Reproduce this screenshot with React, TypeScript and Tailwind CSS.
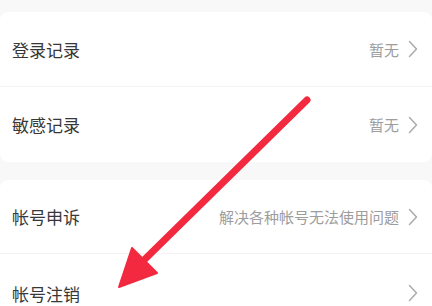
import React from "react";

const font = { fontFamily: '"Noto Sans CJK SC", "Noto Sans", sans-serif' };

function Chevron() {
  return (
    <svg width="10" height="18" viewBox="0 0 10 18" fill="none" className="shrink-0">
      <polyline points="1.5,1.5 8.5,9 1.5,16.5" stroke="#ababab" strokeWidth="1.5" strokeLinecap="round" strokeLinejoin="round" />
    </svg>
  );
}

function Row({ label, value, h, divider }: { label: string; value?: string; h: string; divider?: boolean }) {
  return (
    <div className={`flex items-center justify-between pl-3 pr-[14px] ${h} ${divider ? "border-b border-[#f2f2f2]" : ""}`}>
      <span className="text-[17px] text-[#383838] leading-none">{label}</span>
      <div className="flex items-center gap-[9px]">
        {value && <span className="text-[15px] text-[#9d9d9d] leading-none">{value}</span>}
        <Chevron />
      </div>
    </div>
  );
}

export default function App() {
  return (
    <div className="relative w-[432px] h-[306px] overflow-hidden bg-[#f8f8f8] pt-3" style={font}>
      <div className="bg-white rounded-lg">
        <Row label="登录记录" value="暂无" h="h-[75px]" divider />
        <Row label="敏感记录" value="暂无" h="h-[75px]" />
      </div>
      <div className="h-[18px]" />
      <div className="bg-white rounded-lg">
        <Row label="帐号申诉" value="解决各种帐号无法使用问题" h="h-[74px]" divider />
        <Row label="帐号注销" h="h-[78px]" />
      </div>

      <svg className="absolute inset-0 pointer-events-none" width="432" height="306" viewBox="0 0 432 306">
        <line x1="307" y1="100" x2="142" y2="262" stroke="#f2293f" strokeWidth="7" strokeLinecap="round" />
        <polygon points="119,287 132,248 157,273" fill="#f2293f" stroke="#f2293f" strokeWidth="2" strokeLinejoin="round" />
      </svg>
    </div>
  );
}
